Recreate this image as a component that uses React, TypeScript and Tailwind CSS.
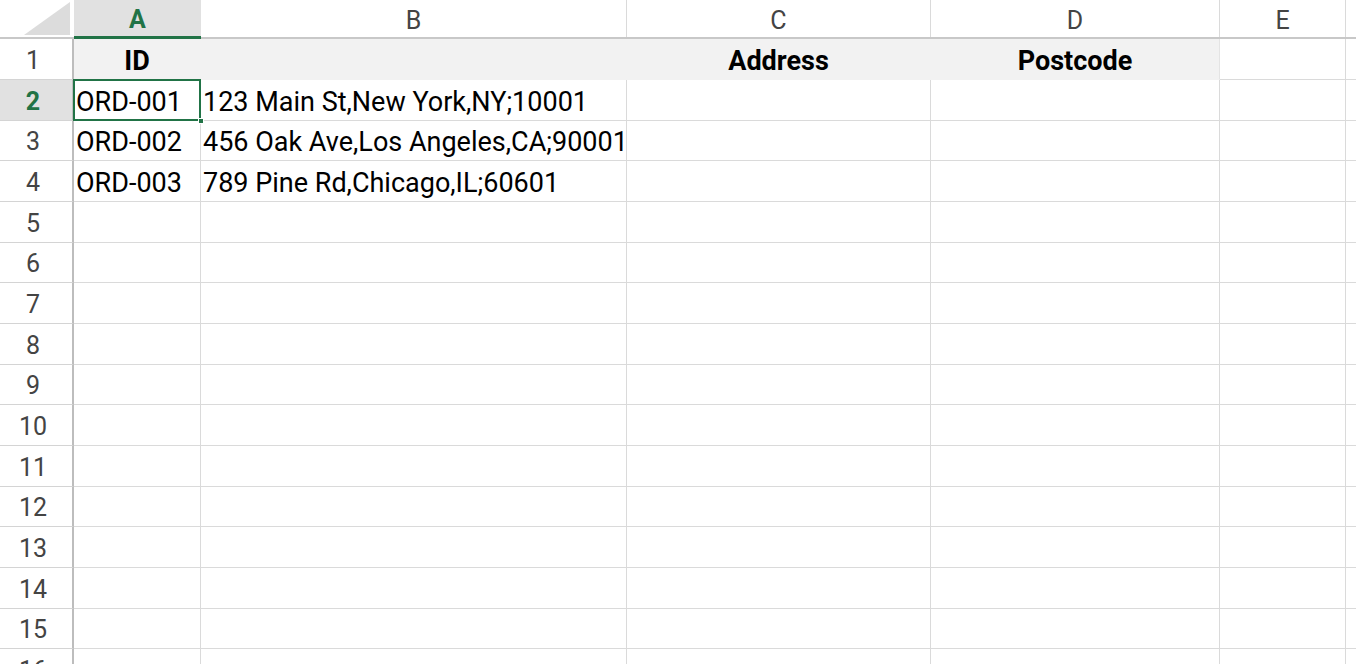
import React from "react";

const COLS = [
  { key: "A", w: 127 },
  { key: "B", w: 426 },
  { key: "C", w: 304 },
  { key: "D", w: 289 },
  { key: "E", w: 126 },
  { key: "", w: 126 },
];

const HEIGHTS = [41, 41, 40, 41, 41, 40, 41, 41, 40, 41, 41, 40, 41, 41, 40, 41];

const DATA: Record<number, string[]> = {
  2: ["ORD-001", "123 Main St,New York,NY;10001"],
  3: ["ORD-002", "456 Oak Ave,Los Angeles,CA;90001"],
  4: ["ORD-003", "789 Pine Rd,Chicago,IL;60601"],
};

const font = { fontFamily: "Roboto, 'Liberation Sans', sans-serif" };

const HEADER_TEXT = ["ID", "", "Address", "Postcode"];

export default function App() {
  return (
    <div className="w-[1356px] h-[664px] overflow-hidden bg-white" style={font}>
      {/* column header row */}
      <div className="flex h-[39px] border-b-2 border-[#c8c8c8]">
        <div className="relative w-[74px] shrink-0 border-r-2 border-white">
          <svg className="absolute left-0 top-0" width="72" height="37" viewBox="0 0 72 37">
            <polygon points="70,2 70,35 24,35" fill="#dcdcdc" />
          </svg>
        </div>
        {COLS.map((c, i) => (
          <div
            key={i}
            style={{ width: c.w }}
            className={
              i === 0
                ? "shrink-0 flex items-center justify-center pt-[3px] text-[25px] font-bold text-[#217346] bg-[#e1e1e1] border-b-[3px] border-[#217346] -mb-[2px] h-[39px]"
                : "shrink-0 flex items-center justify-center pt-[4px] text-[25px] text-[#444444] border-r border-[#dadada]"
            }
          >
            {c.key}
          </div>
        ))}
      </div>
      {HEIGHTS.map((h, ri) => {
        const r = ri + 1;
        const sel = r === 2;
        return (
          <div key={r} className="flex" style={{ height: h }}>
            <div
              className={
                "w-[74px] shrink-0 flex items-end justify-center pr-[6px] pb-[5px] leading-[26px] text-[25px] border-b border-r-2 border-b-[#d4d4d4] border-r-[#bdbdbd] " +
                (sel ? "bg-[#e1e1e1] text-[#217346] font-bold" : "text-[#444444]")
              }
            >
              {r}
            </div>
            {COLS.map((c, ci) => {
              let content: React.ReactNode = null;
              let cls =
                "relative shrink-0 border-b border-r flex items-end pb-[4px] leading-[28px] text-[27px] text-black whitespace-nowrap ";
              if (r === 1 && ci < 4) {
                cls +=
                  "bg-[#f2f2f2] justify-center font-bold border-b-[#f2f2f2] " +
                  (ci === 3 ? "border-r-[#e4e4e4] " : "border-r-[#f2f2f2] ");
                content = HEADER_TEXT[ci];
              } else {
                cls += "border-[#dadada] ";
                if (DATA[r] && ci < 2) {
                  cls += "pl-[2px] ";
                  content = DATA[r][ci];
                }
              }
              return (
                <div key={ci} className={cls} style={{ width: c.w }}>
                  {content}
                  {sel && ci === 0 && (
                    <>
                      <div className="absolute -left-[1px] -top-[1px] -right-[1px] -bottom-[1px] border-2 border-[#217346] pointer-events-none" />
                      <div className="absolute -right-[4px] -bottom-[4px] w-[6px] h-[6px] bg-[#217346] border border-white z-10" />
                    </>
                  )}
                </div>
              );
            })}
          </div>
        );
      })}
    </div>
  );
}
